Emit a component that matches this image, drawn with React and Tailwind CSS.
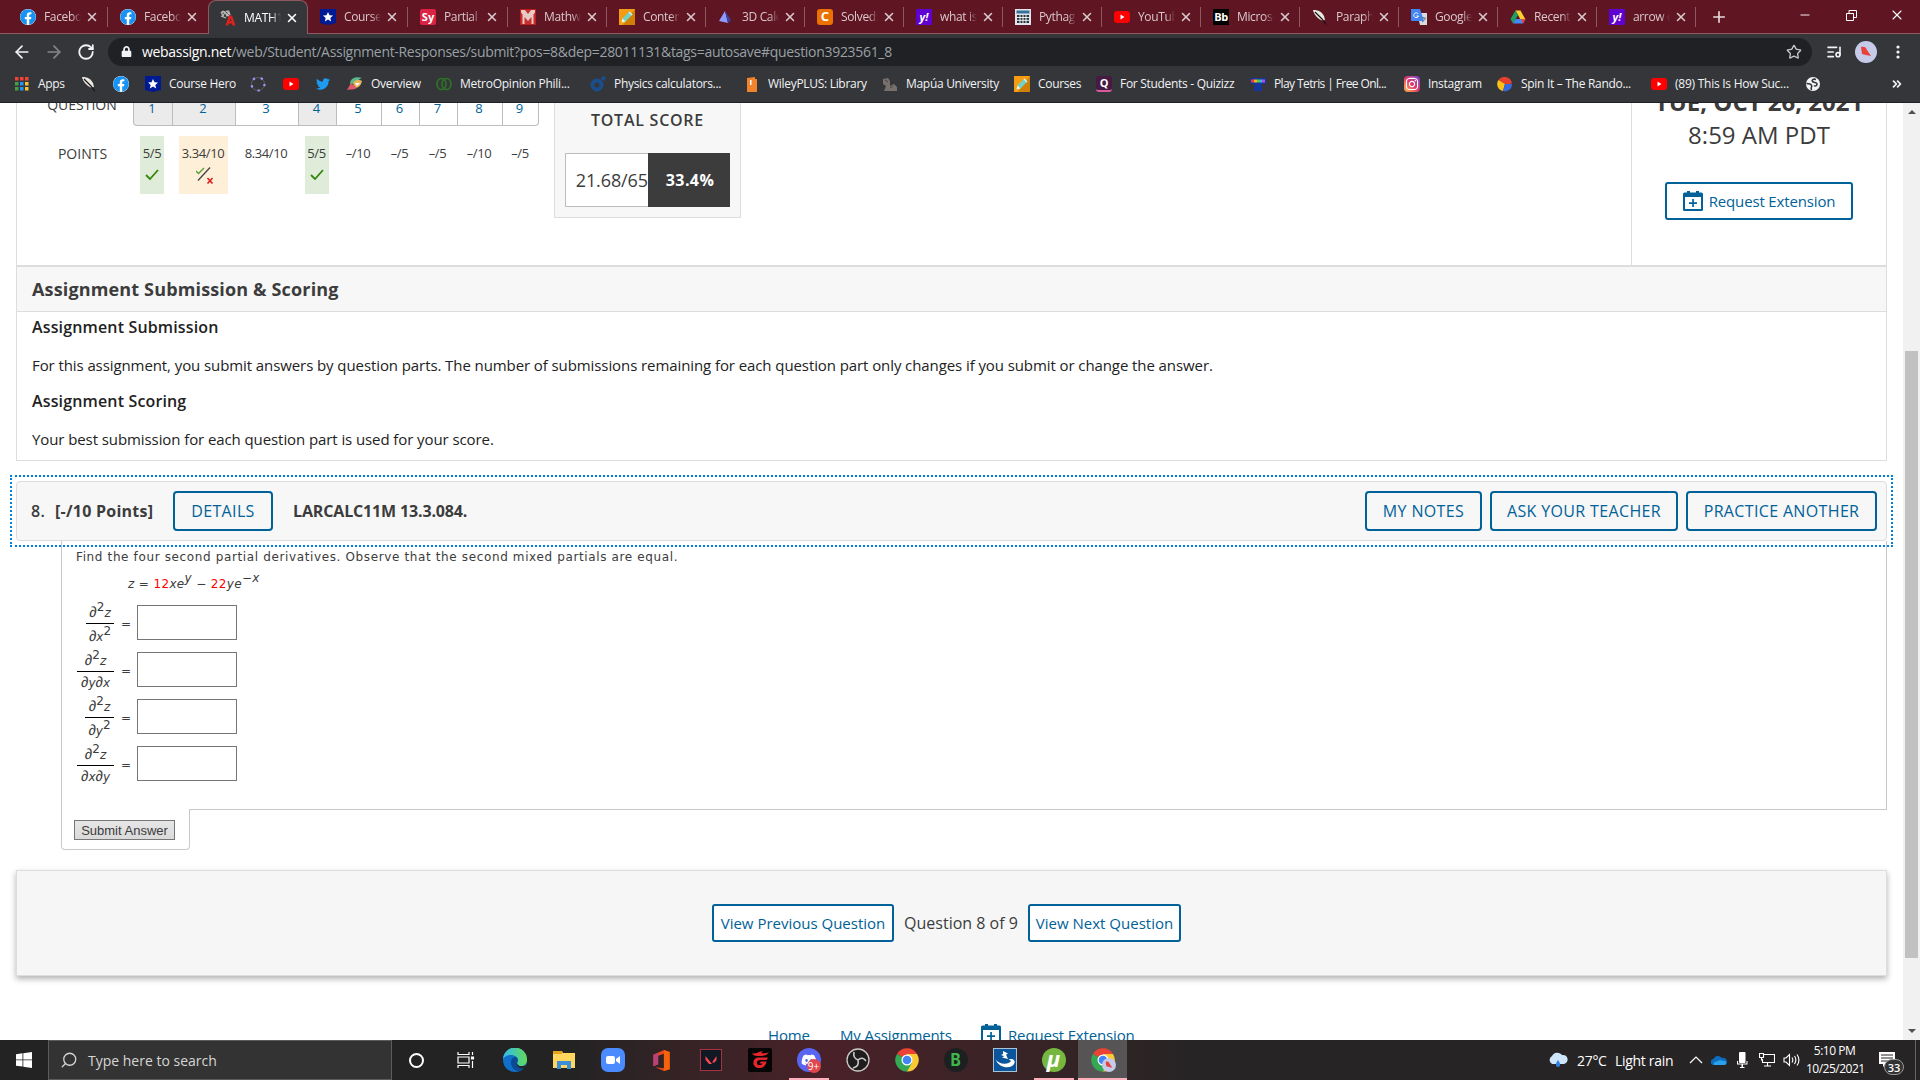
import React from 'react';
import { ArrowLeft, ArrowRight, RotateCw, Star, ListMusic, X, Plus, Minus, ChevronsRight, Search } from 'lucide-react';
import { FaFacebook, FaTwitter, FaLock, FaInstagram, FaDiscord } from 'react-icons/fa';

// ---------- small site icons ----------
const Facebook = () => (
  <span className="block size-4 rounded-full bg-white">
    <FaFacebook className="size-4 text-[#1793f5]" />
  </span>
);
const WebAssign = () => (
  <svg viewBox="0 0 16 16" className="size-4">
    <path d="M1 2l2 4 2-4 2 4 2-4 1 3M3 1l6 5M6 1l3 2M1 6l5 2M2 1l1 2M7 1h2" stroke="#bdbdbd" strokeWidth="1.2" fill="none" />
    <path d="M5.500 15.500l3.500-10h3l3.500 10h-3l-.6-2H8.800l-.8 2zM9.600 11.200h1.900l-.8-2.900z" fill="#e3211c" />
  </svg>
);
const CourseHero = () => (
  <svg viewBox="0 0 16 16" className="size-4">
    <path d="M0 0h16v14l-8 2-8-2z" fill="#001a96" />
    <path d="M8 3l1.500 3.300 3.500.3-2.700 2.300.9 3.500L8 10.500l-3.200 1.900.9-3.500L3 6.600l3.500-.3z" fill="#fff" />
  </svg>
);
const Mathway = () => (
  <svg viewBox="0 0 16 16" className="size-4">
    <path d="M0 0h16v16H0z" fill="#b81f1f" />
    <path d="M1 1h14v14H1z" fill="#e9c9c6" />
    <path d="M5 1h6L8 5zM1 15V3.500l1.500 2V15zM4.500 15V8L8 12l3.500-4v7zM15 15V3.500l-1.500 2V15z" fill="#c9302c" />
  </svg>
);
const Pencil = () => (
  <svg viewBox="0 0 16 16" className="size-4">
    <path d="M0 0h16v16H0z" fill="#f59c14" />
    <path d="M16 0v16H4z" fill="#d17f06" />
    <path d="M2.500 13.500l1-4 7-7 3 3-7 7z" fill="#6fd3c5" />
    <path d="M2.500 13.500l1-4 3 3z" fill="#fff3d6" />
    <path d="M9.500 3.500l1-1 3 3-1 1z" fill="#d6f0f5" />
  </svg>
);
const Prism = () => (
  <svg viewBox="0 0 16 16" className="size-4">
    <path d="M7 2l3 12-9-2z" fill="#8f9bff" />
    <path d="M7 2l6 9-3 3z" fill="#3c3f9c" />
  </svg>
);
const Calculator = () => (
  <svg viewBox="0 0 16 16" className="size-4">
    <path d="M0 0h16v16H0z" fill="#dfe5ea" />
    <path d="M1.500 1.500h13v3h-13z" fill="#36719c" />
    <path d="M2 6h12v8H2z" fill="#27323c" />
    <path d="M2 8.500h12M2 11.300h12M5 6v8M8 6v8M11 6v8" stroke="#fff" strokeWidth=".9" />
  </svg>
);
const Youtube = () => (
  <svg viewBox="0 0 16 16" className="size-4">
    <rect y="2" width="16" height="12" rx="3" fill="#f00" />
    <path d="M6.500 5.500v5L10.500 8z" fill="#fff" />
  </svg>
);
const Translate = () => (
  <svg viewBox="0 0 16 16" className="size-4">
    <path d="M6 4h10v12H9z" fill="#dadce0" />
    <path d="M0 0h9l4 12H1a1 1 0 01-1-1z" fill="#4285f4" />
    <path d="M7.300 5A2.400 2.400 0 107.500 7H5.500" stroke="#fff" fill="none" />
    <path d="M10 9h5M12.500 8v1M11 13c2-1 3-2 3-4" stroke="#607d8b" fill="none" />
  </svg>
);
const Drive = () => (
  <svg viewBox="0 0 16 16" className="size-4">
    <path d="M5.500 1.500h5l5 9h-5z" fill="#ffcf2e" />
    <path d="M5.500 1.500L8 6l-5 8.500L.5 10z" fill="#1ba260" />
    <path d="M5.500 10h10L13 14.500H3z" fill="#4688f4" />
    <path d="M11 10h4.500L13 14.500z" fill="#ea4335" />
  </svg>
);
const Feather = () => (
  <svg viewBox="0 0 16 16" className="size-4">
    <path d="M1 1c4-.5 9 1.500 11 6l1 4-3 .5C6 10 2 6 1 1z" fill="#ece8e2" />
    <path d="M3 3l7 7 4 5.500" stroke="#151515" strokeWidth="1.200" fill="none" />
  </svg>
);
const LetterIcon = ({ cls, children }) => (
  <span className={`flex size-4 items-center justify-center text-[11px] leading-none font-bold text-white ${cls}`}>
    {children}
  </span>
);
const Sy = () => <LetterIcon cls="bg-[#dc2344] rounded-[2px]">Sy</LetterIcon>;
const Yahoo = () => <LetterIcon cls="bg-[#5f01d1] italic">y!</LetterIcon>;
const Blackboard = () => <LetterIcon cls="bg-black tracking-[-0.5px]">Bb</LetterIcon>;
const Chegg = () => <LetterIcon cls="bg-[#eb7100] rounded-[3px] text-[13px]">C</LetterIcon>;
const Quizizz = () => <LetterIcon cls="bg-[#461a42] rounded-[3px] border-b-2 border-[#d85a9a]">Q</LetterIcon>;
const DotRing = () => (
  <svg viewBox="0 0 16 16" className="size-4">
    <circle cx="8" cy="8" r="6.500" fill="none" stroke="#666" strokeWidth=".8" />
    <circle cx="8" cy="8" r="6.500" fill="none" stroke="#9999ff" strokeWidth="2.200" strokeDasharray="2.200 5.970" />
  </svg>
);
const Overview = () => (
  <svg viewBox="0 0 16 16" className="size-4">
    <path d="M3 8c0-5 5-8 12-6-3 1-4 2-4 5z" fill="#5ab98c" />
    <path d="M6 7c3-5 7-3 9-2-1 4-3 7-7 7z" fill="#e7b35a" />
    <path d="M0 14l4-7 6 5c-3 2-6 1-10 2z" fill="#e05a6a" />
    <path d="M8 7h5l-3 3z" fill="#fff" />
  </svg>
);
const Metro = () => (
  <svg viewBox="0 0 16 16" className="size-4" fill="none" stroke="#2d7327" strokeWidth="1.600">
    <ellipse cx="5.500" cy="8" rx="4.500" ry="5.500" />
    <ellipse cx="10.500" cy="8" rx="4.500" ry="5.500" />
  </svg>
);
const Physics = () => (
  <svg viewBox="0 0 16 16" className="size-4">
    <circle cx="7" cy="9" r="4.500" fill="none" stroke="#1b4d8c" strokeWidth="4" />
    <circle cx="13.500" cy="2.500" r="2.200" fill="#1b4d8c" />
  </svg>
);
const Wiley = () => (
  <svg viewBox="0 0 16 16" className="size-4">
    <path d="M3 2l8-1v2h2v13H3z" fill="#f0832c" />
    <path d="M6 4h1.500v5H6z" fill="#fff" />
  </svg>
);
const Mapua = () => (
  <svg viewBox="0 0 16 16" className="size-4">
    <path d="M1 3l5-1 2 3v5l4-2 3 3v4H2l2-5-3-2z" fill="#77706c" />
    <path d="M3 4l3 2M8 12l3-2" stroke="#4a4442" />
  </svg>
);
const Tetris = () => (
  <svg viewBox="0 0 16 16" className="size-4">
    <path d="M0 2h16v6h-4v7H4V8H0z" fill="#17369a" />
    <path d="M1 3.500h3v3H1z" fill="#e83b3b" />
    <path d="M4 3.500h3v3H4z" fill="#f0b429" />
    <path d="M7 3.500h3v3H7z" fill="#57c84d" />
    <path d="M10 3.500h2v3h-2z" fill="#37b6e8" />
    <path d="M12 3.500h3v3h-3z" fill="#b24be0" />
  </svg>
);
const Instagram = () => (
  <span className="flex size-4 items-center justify-center rounded-[4px] bg-linear-to-tr from-[#fdb82f] via-[#e1306c] to-[#7a35d4]">
    <FaInstagram className="size-3.5 text-white" />
  </span>
);
const Spin = () => (
  <svg viewBox="0 0 16 16" className="size-4">
    <path d="M8 8V1a7 7 0 017 6l-2 1z" fill="#e8402f" />
    <path d="M8 8L1.500 4A7 7 0 018 1z" fill="#e8402f" />
    <path d="M8 8L1.500 4a7 7 0 004.500 11z" fill="#fbc116" />
    <path d="M8 8h7a7 7 0 01-9 7z" fill="#3769e0" />
  </svg>
);
const Globe = () => (
  <svg viewBox="0 0 16 16" className="size-4">
    <circle cx="8" cy="8" r="7" fill="#f1f3f4" />
    <path d="M11 3.500C8 2.500 6.500 4 7.500 5.500S12 6 12 8s-2 2.500-3 1.500" stroke="#35363a" strokeWidth="1.600" fill="none" />
    <path d="M1.500 7.500c3 0 5 .8 5.200 2.300S5.500 11.500 6.500 14" stroke="#35363a" strokeWidth="1.600" fill="none" />
  </svg>
);
const Apps = () => (
  <svg viewBox="0 0 16 16" className="size-4">
    {['#f44336', '#f44336', '#f44336', '#43a047', '#2196f3', '#fbc02d', '#43a047', '#2196f3', '#fbc02d'].map((c, i) => (
      <rect key={i} x={1 + (i % 3) * 5} y={1 + Math.floor(i / 3) * 5} width="3.500" height="3.500" fill={c} />
    ))}
  </svg>
);
const Twitter = () => <FaTwitter className="size-4 p-px text-[#1d9bf0]" />;

const tabs = [
  { title: 'Facebook', icon: Facebook },
  { title: 'Facebook', icon: Facebook },
  { title: 'MATH1', icon: WebAssign, active: true },
  { title: 'Course H', icon: CourseHero },
  { title: 'Partial D', icon: Sy },
  { title: 'Mathway', icon: Mathway },
  { title: 'Content', icon: Pencil },
  { title: '3D Calc', icon: Prism },
  { title: 'Solved:', icon: Chegg },
  { title: 'what is t', icon: Yahoo },
  { title: 'Pythago', icon: Calculator },
  { title: 'YouTube', icon: Youtube },
  { title: 'Microso', icon: Blackboard },
  { title: 'Paraphr', icon: Feather },
  { title: 'Google T', icon: Translate },
  { title: 'Recent -', icon: Drive },
  { title: 'arrow d', icon: Yahoo },
];

// w is the slot up to the next bookmark
const bookmarks = [
  { icon: Apps, title: 'Apps', w: 'w-[67px]' },
  { icon: Feather, w: 'w-8' },
  { icon: Facebook, w: 'w-8' },
  { icon: CourseHero, title: 'Course Hero', w: 'w-[105px]' },
  { icon: DotRing, w: 'w-[33px]' },
  { icon: Youtube, w: 'w-8' },
  { icon: Twitter, w: 'w-8' },
  { icon: Overview, title: 'Overview', w: 'w-[89px]' },
  { icon: Metro, title: 'MetroOpinion Phili...', w: 'w-[154px] tracking-[-0.25px]' },
  { icon: Physics, title: 'Physics calculators...', w: 'w-[154px]' },
  { icon: Wiley, title: 'WileyPLUS: Library', w: 'w-[138px]' },
  { icon: Mapua, title: 'Mapúa University', w: 'w-[132px]' },
  { icon: Pencil, title: 'Courses', w: 'w-[82px]' },
  { icon: Quizizz, title: 'For Students - Quizizz', w: 'w-[154px]' },
  { icon: Tetris, title: 'Play Tetris | Free Onl...', w: 'w-[154px] tracking-[-0.6px]' },
  { icon: Instagram, title: 'Instagram', w: 'w-[93px]' },
  { icon: Spin, title: 'Spin It – The Rando...', w: 'w-[154px]' },
  { icon: Youtube, title: '(89) This Is How Suc...', w: 'w-[154px] tracking-[-0.25px]' },
  { icon: Globe, w: 'w-8' },
];

function Tab({ title, icon: Icon, active, wide, hideLine }) {
  return (
    <div
      className={`relative flex shrink-0 items-center ${wide ? 'w-[100px]' : 'w-[99px]'} ${
        active ? 'h-[34px] rounded-t-lg border border-b-0 border-[#8d5a62] bg-[#35363a] pl-[11px]' : 'h-[33px] pl-3'
      }`}
    >
      <Icon />
      <span
        className={`ml-2 w-[37px] overflow-hidden text-[12px] tracking-[-0.35px] whitespace-nowrap [mask-image:linear-gradient(to_right,#000_75%,transparent)] ${
          active ? 'text-white' : 'text-[#d9c9cc]'
        }`}
      >
        {title}
      </span>
      <X className={`ml-1 size-3.5 ${active ? 'text-white' : 'text-[#d9c9cc]'}`} strokeWidth={2.6} />
      {!active && !hideLine && <span className="absolute right-0 h-5 w-px bg-[#8d5a62]" />}
    </div>
  );
}

function BrowserChrome() {
  return (
    <header className="h-[103px] border-b border-[#202124] bg-[#35363a] font-['Open_Sans','Noto_Sans',sans-serif]">
      <div className="flex h-[34px] items-start border-b border-[#8d5a62] bg-[#5f1522] pl-2">
        {tabs.map((tab, i) => (
          <Tab key={i} {...tab} wide={i < 5} hideLine={i === 1} />
        ))}
        <Plus className="mt-[8px] ml-[14px] size-[18px] text-[#e6dadc]" strokeWidth={2.2} />
        <div className="ml-auto flex items-center gap-8 pt-[7px] pr-[15px] text-white">
          <Minus className="mr-0.5 size-3.5" strokeWidth={1.6} />
          <svg viewBox="0 0 11 11" className="size-[11px]" fill="none" stroke="currentColor">
            <path d="M.5 3.500h7v7h-7zM3 3.500v-3h7.500v7H8" />
          </svg>
          <X className="size-4" strokeWidth={1.6} />
        </div>
      </div>
      <div className="flex h-[35px] items-center pl-3 text-[#f1f3f4]">
        <ArrowLeft className="size-5" />
        <ArrowRight className="ml-3 size-5 text-[#85868a]" />
        <RotateCw className="ml-[13px] size-[18px]" strokeWidth={2.4} />
        <div className="ml-[13px] flex h-7 w-[1704px] items-center rounded-full bg-[#202124] pr-2.5 pl-[13px]">
          <FaLock className="size-[11px]" />
          <span className="ml-2.5 text-[14px] tracking-[-0.31px] whitespace-nowrap text-[#9aa0a6]">
            <span className="text-white">webassign.net</span>
            /web/Student/Assignment-Responses/submit?pos=8&amp;dep=28011131&amp;tags=autosave#question3923561_8
          </span>
          <Star className="ml-auto size-4 text-[#c6c8cb]" />
        </div>
        <ListMusic className="ml-3.5 size-4" strokeWidth={2.4} />
        <span className="ml-[13px] flex size-[22px] items-center justify-center rounded-full bg-[#c5cbe9]">
          <svg viewBox="0 0 12 12" className="size-3">
            <path d="M1 1c3-1 5 0 6 3l4 6-5-1-4-1z" fill="#e8413c" />
          </svg>
        </span>
        <svg viewBox="0 0 4 16" className="ml-[19px] h-4 w-1" fill="currentColor">
          <circle cx="2" cy="3" r="1.600" />
          <circle cx="2" cy="8" r="1.600" />
          <circle cx="2" cy="13" r="1.600" />
        </svg>
      </div>
      <div className="flex h-[29px] items-center pl-[14px] text-[12px] tracking-[-0.3px] whitespace-nowrap text-[#f1f3f4]">
        {bookmarks.map(({ icon: Icon, title, w }, i) => (
          <div key={i} className={`flex shrink-0 items-center gap-2 ${w}`}>
            <span className="shrink-0">
              <Icon />
            </span>
            {title && <span>{title}</span>}
          </div>
        ))}
        <ChevronsRight className="ml-auto mr-4 size-3.5" strokeWidth={3} />
      </div>
    </header>
  );
}

// ---------- WebAssign page ----------
const questions = [
  { points: '5/5', result: 'right' },
  { points: '3.34/10', result: 'partial' },
  { points: '8.34/10' },
  { points: '5/5', result: 'right' },
  { points: '–/10' },
  { points: '–/5' },
  { points: '–/5' },
  { points: '–/10' },
  { points: '–/5' },
];

const CalendarPlus = () => (
  <svg viewBox="0 0 20 20" className="size-5 shrink-0">
    <path d="M4 0h3v1.500h6V0h3v1.500h2.500A1.500 1.500 0 0120 3v15.500a1.500 1.500 0 01-1.500 1.500h-17A1.500 1.500 0 010 18.500V3a1.500 1.500 0 011.500-1.500H4zM2 6v12h16V6z" fill="#006298" fillRule="evenodd" />
    <path d="M9.200 8h1.700v3.200H14v1.700h-3.100V16H9.200v-3.100H6v-1.700h3.200z" fill="#006298" />
  </svg>
);

const Check = () => (
  <svg viewBox="0 0 14 11" className="h-[11px] w-[14px]">
    <path d="M1 6l4 4L13 1" fill="none" stroke="#36860b" strokeWidth="1.800" />
  </svg>
);

const Partial = () => (
  <svg viewBox="0 0 18 17" className="h-[17px] w-[18px]">
    <path d="M0 4l2.500 2.500L8 1" fill="none" stroke="#5a9e33" strokeWidth="1.400" />
    <path d="M2 13.500L14 .5" stroke="#444" strokeWidth="1.300" />
    <path d="M11.500 11l5 5.500M16.500 11l-5 5.500" stroke="#e11d1d" strokeWidth="1.600" />
  </svg>
);

function QuestionGrid() {
  return (
    <div className="ml-[14px] grid grid-cols-[102px_39px_63px_63px_38px_45px_38px_38px_45px_37px] grid-rows-[23px_91px] text-center text-[13px] text-[#3c3c3c]">
      <div className="text-[14px] leading-[3px]">QUESTION</div>
      {questions.map((q, i) => (
        <div
          key={i}
          className={`border-b border-l border-[#bdbdbd] pr-0.5 leading-[10px] text-[#006298] ${
            q.result ? 'bg-[#ebebeb]' : 'bg-white'
          } ${i === 8 ? 'rounded-br border-r' : ''} ${i === 0 ? 'rounded-bl' : ''}`}
        >
          {i + 1}
        </div>
      ))}
      <div className="pt-[17px] pl-px text-[14px]">POINTS</div>
      {questions.map((q, i) => (
        <div key={i} className="flex justify-center pt-[10px] pr-px">
          <div
            className={`flex h-[58px] flex-col items-center pt-2 tracking-[-0.4px] ${
              q.result === 'right' ? 'w-6 bg-[#e0ecda]' : q.result === 'partial' ? 'w-[49px] bg-[#fdefd8]' : ''
            }`}
          >
            <span>{q.points}</span>
            {q.result === 'right' && <span className="mt-[5px]"><Check /></span>}
            {q.result === 'partial' && <span className="mt-[3px] ml-1"><Partial /></span>}
          </div>
        </div>
      ))}
    </div>
  );
}

function Summary() {
  return (
    <section className="flex h-[162px] border-x border-[#ddd]">
      <QuestionGrid />
      <div className="ml-[15px] h-[115px] w-[187px] border border-t-0 border-[#ddd] bg-[#f7f7f7] pt-[5px] text-[#3c3c3c]">
        <p className="text-center text-[16px] leading-[24px] font-semibold tracking-[0.75px]">TOTAL SCORE</p>
        <div className="mt-[21px] ml-[10px] flex h-[54px] w-[165px]">
          <div className="flex w-[83px] items-center justify-end overflow-hidden border border-r-0 border-[#bdbdbd] bg-white text-[18px] tracking-[-0.1px]">
            21.68/65
          </div>
          <div className="flex flex-1 items-center justify-center bg-[#3c3c3c] pl-0.5 text-[16px] font-bold tracking-[0.4px] text-white">
            33.4%
          </div>
        </div>
      </div>
      <div className="ml-auto flex w-[255px] flex-col items-center border-l border-[#ddd] text-[24px] text-[#3c3c3c]">
        <p className="-mt-[17px] leading-[32px] font-bold">TUE, OCT 26, 2021</p>
        <p className="leading-[34px]">8:59 AM PDT</p>
        <button className="mt-[30px] flex h-[38px] w-[188px] items-center justify-center gap-1.5 rounded-[3px] border-2 border-[#006298] text-[15px] tracking-[-0.15px] text-[#006298]">
          <CalendarPlus />
          Request Extension
        </button>
      </div>
    </section>
  );
}

function Submission() {
  return (
    <section className="h-[196px] border border-t-2 border-[#ddd] text-[#222]">
      <h2 className="flex h-[45px] items-center border-b border-[#ddd] bg-[#f7f7f7] pl-[15px] text-[18px] font-bold tracking-[0.15px] text-[#3c3c3c]">
        Assignment Submission &amp; Scoring
      </h2>
      <div className="pl-[15px] text-[15px] tracking-[-0.088px] whitespace-nowrap">
        <h3 className="pt-[3px] text-[16px] leading-6 font-semibold tracking-[0.15px]">Assignment Submission</h3>
        <p className="pt-[14px] leading-6">
          For this assignment, you submit answers by question parts. The number of submissions remaining for each question
          part only changes if you submit or change the answer.
        </p>
        <h3 className="pt-[12px] text-[16px] leading-6 font-semibold tracking-[0.15px]">Assignment Scoring</h3>
        <p className="pt-[14px] leading-6">Your best submission for each question part is used for your score.</p>
      </div>
    </section>
  );
}

const HeaderButton = ({ w, children }) => (
  <button className={`h-10 rounded border-2 border-[#006298] bg-[#f7f7f7] text-[16px] font-medium tracking-[0.35px] text-[#006298] ${w}`}>
    {children}
  </button>
);

function QuestionHeader() {
  return (
    <div className="-mx-[6px] mt-[14px] h-[72px] border-2 border-dotted border-[#0080dd] p-1">
      <div className="flex h-[60px] items-center rounded-sm border border-[#ddd] bg-[#f7f7f7] pr-[9px] pl-[14px] text-[16px] font-semibold text-[#3c3c3c]">
        <span className="w-6 tracking-[0.3px]">8.</span>
        <span className="w-[118px] font-bold tracking-[0.25px]">[-/10 Points]</span>
        <HeaderButton w="w-[100px]">DETAILS</HeaderButton>
        <span className="ml-5 font-bold tracking-[-0.15px]">LARCALC11M 13.3.084.</span>
        <div className="ml-auto flex gap-2">
          <HeaderButton w="w-[117px]">MY NOTES</HeaderButton>
          <HeaderButton w="w-[188px]">ASK YOUR TEACHER</HeaderButton>
          <HeaderButton w="w-[191px]">PRACTICE ANOTHER</HeaderButton>
        </div>
      </div>
    </div>
  );
}

const Sup = ({ children }) => <span className="relative -top-[6px]">{children}</span>;
const D = () => <span className="font-['Liberation_Sans'] text-[15px] leading-[12px]">∂</span>;

const partials = [
  { den: <><D /><i>x</i><Sup>2</Sup></>, w: 'w-[28px]', top: 'h-[25px]', gap: 'pt-[6px]' },
  { den: <><D /><i>y</i><D /><i>x</i></>, w: 'w-[37px]', top: 'h-[26px]', gap: 'pt-[4px]' },
  { den: <><D /><i>y</i><Sup>2</Sup></>, w: 'w-[29px]', top: 'h-[25px]', gap: 'pt-[6px]' },
  { den: <><D /><i>x</i><D /><i>y</i></>, w: 'w-[37px]', top: 'h-[26px]', gap: 'pt-[4px]' },
];

function QuestionBody() {
  return (
    <div className="-mt-[6px] ml-[45px] font-['DejaVu_Sans',Verdana,sans-serif] text-[12px] text-[#3c3c3c]">
      <div className="h-[268px] border-r border-l border-[#c9c9c9] pt-[8px] pl-[14px]">
        <p className="leading-4 tracking-[0.63px]">
          Find the four second partial derivatives. Observe that the second mixed partials are equal.
        </p>
        <p className="mt-[11px] ml-[52px] leading-4 tracking-[0.35px] whitespace-pre">
          <i>z</i> = <span className="text-[#f00]">12</span><i>xe</i><Sup><i>y</i></Sup> −{' '}
          <span className="text-[#f00]">22</span><i>ye</i><Sup>−<i>x</i></Sup>
        </p>
        <div className="mt-[7px]">
          {partials.map((p, i) => (
            <div key={i} className="flex h-[47px]">
              <div className="flex w-[38px] flex-col items-end leading-[12px]">
                <div className={`flex items-end justify-center border-b border-black pb-1 ${p.top} ${p.w}`}>
                  <span><D /><Sup>2</Sup><i>z</i></span>
                </div>
                <div className={`text-center whitespace-nowrap ${p.gap} ${p.w}`}>{p.den}</div>
              </div>
              <span className="ml-[7px] w-4 pt-[17px] leading-4">=</span>
              <input className="mt-[6px] h-[35px] w-[100px] border border-[#767676] bg-white" />
            </div>
          ))}
        </div>
      </div>
      <div className="flex">
        <div className="h-[41px] w-[129px] rounded-b border border-t-0 border-[#c9c9c9] pt-[11px] pl-3">
          <button className="h-5 w-[101px] border border-[#767676] bg-linear-to-b from-[#e6e6e6] to-[#dadada] font-['Liberation_Sans',Arial,sans-serif] text-[13px] leading-none whitespace-nowrap">
            Submit Answer
          </button>
        </div>
        <div className="h-10 flex-1 border-t border-[#c9c9c9]" />
      </div>
    </div>
  );
}

const NavButton = ({ w, children }) => (
  <button className={`h-[38px] rounded-[3px] border-2 border-[#006298] bg-white text-[15px] text-[#006298] ${w}`}>
    {children}
  </button>
);

function Page() {
  return (
    <div className="flex h-[937px] overflow-hidden bg-white font-['Open_Sans','Noto_Sans',sans-serif]">
      <main className="ml-4 w-[1871px] shrink-0">
        <Summary />
        <Submission />
        <QuestionHeader />
        <QuestionBody />
        <div className="mt-[20px] flex h-[106px] items-center justify-center gap-2.5 border border-[#ddd] bg-[#f6f6f6] pr-[10px] text-[#3c3c3c] shadow-[0_3px_6px_rgba(0,0,0,0.3)]">
          <NavButton w="w-[182px]">View Previous Question</NavButton>
          <span className="w-[114px] text-center text-[16px] whitespace-nowrap">Question 8 of 9</span>
          <NavButton w="w-[153px]">View Next Question</NavButton>
        </div>
        <nav className="mt-[47px] flex pl-[752px] text-[15px] leading-6 tracking-[-0.15px] whitespace-nowrap text-[#006298]">
          <a className="w-[72px]">Home</a>
          <a className="w-[141px]">My Assignments</a>
          <a className="flex gap-[7px]">
            <span className="pt-px"><CalendarPlus /></span>
            Request Extension
          </a>
        </nav>
      </main>
      <div className="ml-auto flex w-[17px] flex-col items-center bg-[#f1f1f1]">
        <svg viewBox="0 0 8 4" className="mt-[7px] h-1 w-2"><path d="M0 4l4-4 4 4z" fill="#505050" /></svg>
        <div className="mt-[237px] h-[607px] w-[13px] bg-[#c1c1c1]" />
        <svg viewBox="0 0 8 4" className="mt-auto mb-[7px] h-1 w-2"><path d="M0 0l4 4 4-4z" fill="#505050" /></svg>
      </div>
    </div>
  );
}

// ---------- taskbar ----------
const ChromeLogo = () => (
  <svg viewBox="0 0 24 24" className="size-6">
    <path d="M12 12L2 6a11.500 11.500 0 0120 0z" fill="#ea4335" />
    <path d="M12 12V6h10a11.500 11.500 0 01-10.500 17.500z" fill="#fbc934" />
    <path d="M12 12l5 3-5 8.500A11.500 11.500 0 012 6z" fill="#34a853" />
    <circle cx="12" cy="12" r="5.500" fill="#fff" />
    <circle cx="12" cy="12" r="4.300" fill="#4285f4" />
  </svg>
);

const apps = [
  { name: 'cortana', el: <span className="size-[15px] rounded-full border-2 border-white" /> },
  {
    name: 'taskview',
    el: (
      <svg viewBox="0 0 18 16" className="h-4 w-[18px]" fill="none" stroke="#fff" strokeWidth="1.200">
        <path d="M1 0v2.500h11V0M1 16v-2.500h11V16M1 5h11v6H1zM15.500 0v3M15.500 9v7" />
        <path d="M14.500 5h2v2h-2z" fill="#fff" />
      </svg>
    ),
  },
  {
    name: 'edge',
    el: (
      <svg viewBox="0 0 24 24" className="size-6">
        <defs>
          <linearGradient id="edgeTop" x1="0" x2="1">
            <stop offset="0" stopColor="#35b8f0" />
            <stop offset="1" stopColor="#5fdc57" />
          </linearGradient>
        </defs>
        <circle cx="12" cy="12" r="12" fill="#0f6fc9" />
        <path d="M0 11a12 12 0 0124 1c0 4-3 6-6 6s-5-1-4-3c3-4-1-8-6-8-4 0-7 2-8 4z" fill="url(#edgeTop)" />
        <path d="M8 14c0-3 2-5 5-5 2 1 2 3 1 6 0 3 4 4 7 3l1 1c-2 3-5 4-7 4-5-1-7-5-7-9z" fill="#0c4a94" />
        <path d="M14 15c0 3 4 4 8 2.500l1 2-2 1c-4 0-8-2-7-5.500z" fill="#262425" />
      </svg>
    ),
  },
  {
    name: 'explorer',
    el: (
      <svg viewBox="0 0 22 20" className="h-5 w-[22px]">
        <path d="M0 1h9l1 2h12v15H0z" fill="#ffd75e" />
        <path d="M0 1h9v3H0z" fill="#e8a31d" />
        <path d="M4 11h14v8h-4v-4H8v4H4z" fill="#3a8fd6" />
      </svg>
    ),
  },
  {
    name: 'zoom',
    el: (
      <span className="flex size-6 items-center justify-center rounded-[7px] bg-[#4a8cff]">
        <svg viewBox="0 0 14 8" className="h-2 w-3.5" fill="#fff">
          <rect width="9" height="8" rx="2" />
          <path d="M10 3l4-3v8l-4-3z" />
        </svg>
      </span>
    ),
  },
  {
    name: 'office',
    el: (
      <svg viewBox="0 0 20 24" className="h-[23px] w-5">
        <path d="M1 6l11-5 6 2v18l-6 2-9-4 9 1V5L6 7v9l-5 2z" fill="#e8481c" />
        <path d="M12 1l6 2v18l-6 2z" fill="#f7630c" />
        <path d="M1 6l5-2v12l-5 2z" fill="#b7417a" />
      </svg>
    ),
  },
  {
    name: 'valorant',
    el: (
      <svg viewBox="0 0 22 22" className="size-[22px]">
        <rect x=".5" y=".5" width="21" height="21" fill="#101823" stroke="#a8323c" />
        <path d="M5.500 7l6.500 8h-3l-3.500-4.200zM16.500 7v4l-2 2.500H12z" fill="#ff4655" />
      </svg>
    ),
  },
  {
    name: 'garena',
    el: (
      <svg viewBox="0 0 24 24" className="size-6">
        <rect width="24" height="24" rx="2" fill="#050505" />
        <path d="M4 5.500c4 .5 7-2 11-2.500-1.500 1.200-2 2-1 2.300 2.500.2 4.500 0 7-1-2 3.200-5.500 3.900-10 3.700C7.500 8 5 7.500 4 5.500z" fill="#e3262b" />
        <path d="M20 9.500H9.500C3.500 11 4 20 11 20c4.500 0 7-2.500 7.500-6.500h-5.500l-1.500 2h3c-1 2-5 2-5.500 0s1-3.500 3-3.500h6.500z" fill="#e3262b" />
      </svg>
    ),
  },
  {
    name: 'discord',
    running: true,
    el: (
      <span className="relative flex size-6 items-center justify-center rounded-full bg-[#5865f2]">
        <FaDiscord className="size-4 text-white" />
        <span className="absolute top-[11px] left-[10px] flex size-3.5 items-center justify-center rounded-full bg-[#e0474c] text-[10px] leading-none text-white">9+</span>
      </span>
    ),
  },
  {
    name: 'obs',
    el: (
      <svg viewBox="0 0 24 24" className="size-6">
        <circle cx="12" cy="12" r="11" fill="#1f1c1d" stroke="#c9c9c9" strokeWidth="1.300" />
        <g fill="none" stroke="#c9c9c9" strokeWidth="1.600">
          <path d="M8 4c-1 5 1 7 4 8" />
          <path d="M12 12c3-3 6-2 8 1" />
          <path d="M12 12c1 4-1 7-5 8" />
        </g>
      </svg>
    ),
  },
  { name: 'chrome', el: <ChromeLogo /> },
  {
    name: 'bluestacks',
    el: (
      <span className="flex size-6 items-center justify-center rounded-full bg-[#1d2021] font-['DejaVu_Sans_Mono'] text-[17px] leading-none font-bold text-[#3fb54a]">
        B
      </span>
    ),
  },
  {
    name: 'installer',
    el: (
      <svg viewBox="0 0 24 24" className="size-6">
        <rect x=".5" y=".5" width="23" height="23" fill="#0a559c" stroke="#a9c3d8" />
        <path d="M2.500 11.500c3 4 9 5.500 14 3 2-1 1.500-2.500-1-3 4-1.500 7 .5 6 3.500-2.500 6.500-15 6-19-3.500z" fill="#fff" />
        <path d="M10 3l5 2.500-2 1.200 2 4.300-6-1.500 2.200-1.300L8 7l2-1z" fill="#fff" />
      </svg>
    ),
  },
  {
    name: 'utorrent',
    running: true,
    el: (
      <span className="flex size-6 items-center justify-center rounded-full bg-[#76b83f] pb-1 text-[22px] leading-none font-bold text-white italic">
        µ
      </span>
    ),
  },
  {
    name: 'chrome-profile',
    running: true,
    focused: true,
    el: (
      <span className="relative">
        <ChromeLogo />
        <span className="absolute top-[10px] left-[11px] flex size-3.5 items-center justify-center rounded-full bg-[#c5cbe9]">
          <svg viewBox="0 0 12 12" className="size-2"><path d="M1 1c3-1 5 0 6 3l4 6-5-1-4-1z" fill="#e8413c" /></svg>
        </span>
      </span>
    ),
  },
];

function Taskbar() {
  return (
    <footer className="flex h-10 bg-linear-to-r from-[#242324] from-30% via-[#4a2128] via-43% to-[#272425] to-62% font-['Open_Sans','Noto_Sans',sans-serif] text-white">
      <div className="flex w-12 items-center justify-center">
        <svg viewBox="0 0 16 16" className="size-4" fill="#fff">
          <path d="M0 2.200L6.500 1.300v6.200H0zM7.300 1.200L16 0v7.500H7.300zM0 8.300h6.500v6.300L0 13.700zM7.300 8.300H16V16l-8.700-1.200z" />
        </svg>
      </div>
      <div className="flex w-[344px] items-center border border-[#5c5c5c] bg-[#333] pl-[11px] text-[14px] text-[#d6d6d6]">
        <Search className="size-[18px] -scale-x-100" strokeWidth={1.7} />
        <span className="ml-[10px]">Type here to search</span>
      </div>
      {apps.map((app) => (
        <div
          key={app.name}
          className={`relative flex w-[49px] shrink-0 items-center justify-center ${app.focused ? 'bg-[#575455]' : ''}`}
        >
          {app.el}
          {app.running && (
            <span className={`absolute bottom-0 h-0.5 bg-[#ffaebb] ${app.focused ? 'w-full' : 'w-10'}`} />
          )}
        </div>
      ))}
      <div className="ml-auto flex items-center text-[14px] whitespace-nowrap">
        <svg viewBox="0 0 22 16" className="h-4 w-[22px]">
          <path d="M5 12a4.500 4.500 0 010-8 6 6 0 0110-1 4.600 4.600 0 012 9z" fill="#cfe6fa" />
          <path d="M11 8c3 4 2.500 7 0 7s-3-3 0-7z" fill="#2f7fe0" />
        </svg>
        <span className="ml-2 w-[38px] tracking-[-0.3px]">27°C</span>
        <span className="w-[74px] tracking-[-0.3px]">Light rain</span>
        <svg viewBox="0 0 14 8" className="h-2 w-3.5" fill="none" stroke="#fff" strokeWidth="1.200">
          <path d="M1 7l6-6 6 6" />
        </svg>
        <svg viewBox="0 0 16 10" className="ml-2 h-2.5 w-4">
          <path d="M3 10a3 3 0 01-.5-6A5 5 0 0111 3a3.600 3.600 0 012.500 7z" fill="#0f6cbd" />
          <path d="M3 10c-1-2 1-4 3-3.500l3-1.500 4 1a2 2 0 01.5 4z" fill="#29a3ee" />
        </svg>
        <svg viewBox="0 0 12 16" className="ml-[9px] h-4 w-3" fill="#fff">
          <rect x="3" width="6.500" height="11" rx="1" />
          <path d="M1 9v3.500h4.500V15H4v1h4.500v-1H7v-2.500h4.500V9h-1v2.500h-8.500V9z" />
        </svg>
        <svg viewBox="0 0 16 14" className="ml-[11px] h-3.5 w-4" fill="none" stroke="#fff" strokeWidth="1.100">
          <path d="M5 1.500h10.500v8H3.500V6M8.500 9.500v3M5 13h7M.5.5h4v4h-4zM2.500 4.500v3" />
        </svg>
        <svg viewBox="0 0 17 14" className="ml-2 h-3.5 w-[17px]" fill="none" stroke="#fff" strokeWidth="1.100">
          <path d="M1 5h2l3.500-3.500v11L3 9H1zM9 4.500c1 1.500 1 3.500 0 5M11.500 3c1.700 2.500 1.700 5.500 0 8M14 1.500c2.500 3.500 2.500 7.500 0 11" />
        </svg>
        <div className="ml-[6px] w-[57px] text-center text-[12px] leading-[18px] tracking-[-0.5px]">
          <p>5:10 PM</p>
          <p>10/25/2021</p>
        </div>
        <div className="relative ml-4 h-4 w-[36px]">
          <svg viewBox="0 0 16 15" className="h-[15px] w-4">
            <path d="M0 0h16v12H7l-3 3v-3H0z" fill="#fff" />
            <path d="M2 3h12M2 6h12M2 9h8" stroke="#222" />
          </svg>
          <span className="absolute top-[7px] left-[5px] flex h-4 w-5 items-center justify-center rounded-full border border-[#999] bg-[#333] text-[11px] leading-none font-semibold">
            33
          </span>
        </div>
        <span className="mr-1 h-10 w-px bg-[#666]" />
      </div>
    </footer>
  );
}

export default function App() {
  return (
    <div className="h-[1080px] w-[1920px] overflow-hidden">
      <BrowserChrome />
      <Page />
      <Taskbar />
    </div>
  );
}
